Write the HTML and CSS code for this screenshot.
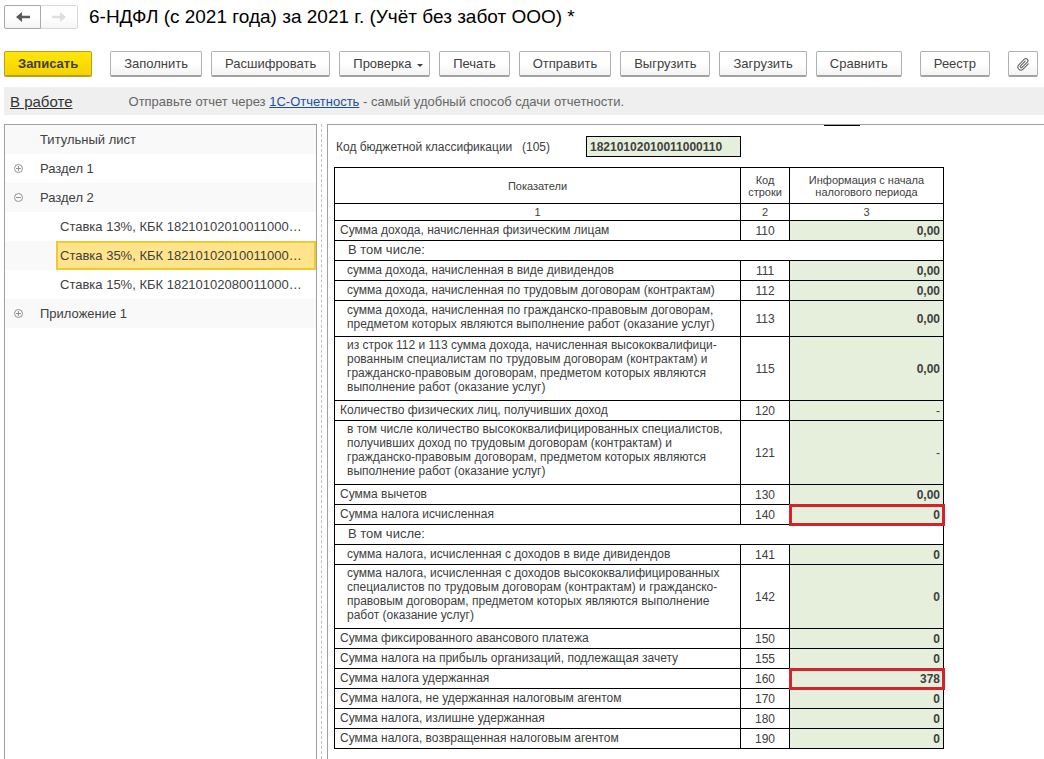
FILE: index.html
```html
<!DOCTYPE html>
<html lang="ru">
<head>
  <meta charset="UTF-8">
  <title>6-НДФЛ (с 2021 года) за 2021 г.</title>
  <link rel="stylesheet" href="styles.css">
</head>
<body>

  <header class="header">
    <div class="history">
      <button class="history-button" type="button" aria-label="Назад">
        <svg width="14" height="10" viewBox="0 0 14 10"><path d="M0 5 6 0V3.8H14V6.2H6V10Z" fill="#5a5a5a"/></svg>
      </button>
      <button class="history-button" type="button" aria-label="Вперед" disabled>
        <svg width="14" height="10" viewBox="0 0 14 10"><path d="M14 5 8 0V3.8H0V6.2H8V10Z" fill="#dedede"/></svg>
      </button>
    </div>
    <h1>6-НДФЛ (с 2021 года) за 2021 г. (Учёт без забот ООО) *</h1>
  </header>

  <div class="toolbar">
    <button class="button primary" type="button">Записать</button>
    <div class="button-group">
      <button class="button" type="button">Заполнить</button>
      <button class="button" type="button">Расшифровать</button>
      <button class="button dropdown" type="button">Проверка <span class="arrow"></span></button>
      <button class="button" type="button">Печать</button>
      <button class="button" type="button">Отправить</button>
      <button class="button" type="button">Выгрузить</button>
      <button class="button" type="button">Загрузить</button>
      <button class="button" type="button">Сравнить</button>
    </div>
    <button class="button" type="button">Реестр</button>
    <button class="button attach" type="button" aria-label="Файлы">
      <svg width="14" height="14" viewBox="0 0 14 14" fill="none" stroke="#666" stroke-width="1.1" stroke-linecap="round"><path d="M9.2 4.2 4.6 8.8a1 1 0 0 0 1.5 1.5l5.2-5.2a2 2 0 0 0-2.9-2.9L2.8 7.8a3 3 0 0 0 4.3 4.3l5.2-5.2"/></svg>
    </button>
  </div>

  <div class="info">
    <a class="status" href="#">В работе</a>
    <p>Отправьте отчет через <a href="#">1С-Отчетность</a> - самый удобный способ сдачи отчетности.</p>
  </div>

  <main class="content">
    <nav class="tree">
      <div class="tree-row"><span class="tree-item">Титульный лист</span></div>
      <div class="tree-row">
        <button class="toggle" type="button" aria-label="Развернуть"><svg width="9" height="9" viewBox="0 0 9 9" fill="none" stroke="#909090"><circle cx="4.5" cy="4.5" r="4"/><path d="M2 4.5H7M4.5 2V7"/></svg></button>
        <span class="tree-item">Раздел 1</span>
      </div>
      <div class="tree-row">
        <button class="toggle" type="button" aria-label="Свернуть"><svg width="9" height="9" viewBox="0 0 9 9" fill="none" stroke="#909090"><circle cx="4.5" cy="4.5" r="4"/><path d="M2 4.5H7"/></svg></button>
        <span class="tree-item">Раздел 2</span>
      </div>
      <div class="tree-row"><span class="tree-item child">Ставка 13%, КБК 18210102010011000110</span></div>
      <div class="tree-row"><span class="tree-item child selected">Ставка 35%, КБК 18210102010011000110</span></div>
      <div class="tree-row"><span class="tree-item child">Ставка 15%, КБК 18210102080011000110</span></div>
      <div class="tree-row">
        <button class="toggle" type="button" aria-label="Развернуть"><svg width="9" height="9" viewBox="0 0 9 9" fill="none" stroke="#909090"><circle cx="4.5" cy="4.5" r="4"/><path d="M2 4.5H7M4.5 2V7"/></svg></button>
        <span class="tree-item">Приложение 1</span>
      </div>
    </nav>

    <div class="splitter"></div>

    <section class="sheet">
      <div class="mark"></div>
      <div class="kbk">
        <label for="kbk">Код бюджетной классификации</label>
        <span class="kbk-line">(105)</span>
        <input id="kbk" type="text" value="18210102010011000110">
      </div>

      <table class="report">
        <colgroup>
          <col class="col-name">
          <col class="col-code">
          <col class="col-value">
        </colgroup>
        <thead>
          <tr class="titles"><th>Показатели</th><th>Код<br>строки</th><th>Информация с начала<br>налогового периода</th></tr>
          <tr class="numbers"><th>1</th><th>2</th><th>3</th></tr>
        </thead>
        <tbody>
          <tr><td>Сумма дохода, начисленная физическим лицам</td><td>110</td><td>0,00</td></tr>
          <tr><td class="including" colspan="3">В том числе:</td></tr>
          <tr class="sub"><td>сумма дохода, начисленная в виде дивидендов</td><td>111</td><td>0,00</td></tr>
          <tr class="sub"><td>сумма дохода, начисленная по трудовым договорам (контрактам)</td><td>112</td><td>0,00</td></tr>
          <tr class="sub two-lines"><td>сумма дохода, начисленная по гражданско-правовым договорам,<br>предметом которых являются выполнение работ (оказание услуг)</td><td>113</td><td>0,00</td></tr>
          <tr class="sub four-lines"><td>из строк 112 и 113 сумма дохода, начисленная высококвалифици-<br>рованным специалистам по трудовым договорам (контрактам) и<br>гражданско-правовым договорам, предметом которых являются<br>выполнение работ (оказание услуг)</td><td>115</td><td>0,00</td></tr>
          <tr><td>Количество физических лиц, получивших доход</td><td>120</td><td class="empty">-</td></tr>
          <tr class="sub four-lines"><td>в том числе количество высококвалифицированных специалистов,<br>получивших доход по трудовым договорам (контрактам) и<br>гражданско-правовым договорам, предметом которых являются<br>выполнение работ (оказание услуг)</td><td>121</td><td class="empty">-</td></tr>
          <tr><td>Сумма вычетов</td><td>130</td><td>0,00</td></tr>
          <tr><td>Сумма налога исчисленная</td><td>140</td><td class="marked">0</td></tr>
          <tr><td class="including" colspan="3">В том числе:</td></tr>
          <tr class="sub"><td>сумма налога, исчисленная с доходов в виде дивидендов</td><td>141</td><td>0</td></tr>
          <tr class="sub four-lines"><td>сумма налога, исчисленная с доходов высококвалифицированных<br>специалистов по трудовым договорам (контрактам) и гражданско-<br>правовым договорам, предметом которых являются выполнение<br>работ (оказание услуг)</td><td>142</td><td>0</td></tr>
          <tr><td>Сумма фиксированного авансового платежа</td><td>150</td><td>0</td></tr>
          <tr><td>Сумма налога на прибыль организаций, подлежащая зачету</td><td>155</td><td>0</td></tr>
          <tr><td>Сумма налога удержанная</td><td>160</td><td class="marked">378</td></tr>
          <tr><td>Сумма налога, не удержанная налоговым агентом</td><td>170</td><td>0</td></tr>
          <tr><td>Сумма налога, излишне удержанная</td><td>180</td><td>0</td></tr>
          <tr><td>Сумма налога, возвращенная налоговым агентом</td><td>190</td><td>0</td></tr>
        </tbody>
      </table>
    </section>
  </main>

</body>
</html>
```
FILE: styles.css
```css
* {
  box-sizing: border-box;
}

body {
  margin: 0;
  padding: 5px 0 0 4px;
  min-height: 100vh;
  display: flex;
  flex-direction: column;
  background-color: #fff;
  color: #404040;
  font-family: "Liberation Sans", Arial, sans-serif;
  font-size: 13px;
}

button,
input {
  font: inherit;
  color: inherit;
}

/* Header */
.header {
  display: flex;
  align-items: center;
  gap: 11px;
  height: 24px;
}

.history {
  display: flex;
}

.history-button {
  display: flex;
  align-items: center;
  justify-content: center;
  width: 37px;
  height: 24px;
  padding: 0;
  border: 1px solid #a8a8a8;
  border-radius: 2px 0 0 2px;
  background: linear-gradient(#fff 50%, #f5f5f5);
}

.history-button:disabled {
  border-color: #d8d8d8;
  border-left: none;
  border-radius: 0 2px 2px 0;
}

h1 {
  margin: 0;
  font-size: 19px;
  font-weight: normal;
  line-height: 24px;
  color: #000;
}

/* Toolbar */
.toolbar {
  display: flex;
  gap: 18px;
  margin-top: 22px;
}

.button-group {
  display: flex;
  gap: 9px;
}

.button {
  height: 26px;
  padding: 0 13px;
  border: 1px solid #b0b0b0;
  border-bottom: 2px solid #a0a0a0;
  border-radius: 2px;
  background: linear-gradient(#fff 50%, #f3f3f3);
  white-space: nowrap;
  cursor: pointer;
}

.button.primary {
  border-color: #b5a020;
  background: linear-gradient(#ffe60a, #f5d300);
  font-weight: bold;
}

.button.dropdown {
  padding-right: 6px;
}

.button.attach {
  display: flex;
  align-items: center;
  padding: 0 7px;
}

.arrow {
  display: inline-block;
  margin-left: 2px;
  border: 3px solid transparent;
  border-top-color: #404040;
  border-bottom: none;
  vertical-align: 1px;
}

/* Info line */
.info {
  display: flex;
  align-items: center;
  gap: 56px;
  height: 28px;
  margin-top: 10px;
  padding-left: 6px;
  background-color: #efefef;
  color: #666;
}

.info p {
  margin: 0;
}

.info a {
  color: #1f4e9e;
}

.info .status {
  font-size: 15px;
  color: #333;
}

/* Content */
.content {
  display: flex;
  flex: 1;
  margin-top: 9px;
}

.tree {
  flex: 0 0 313px;
  min-width: 0;
  border: 1px solid #a0a0a0;
  border-bottom: none;
}

.tree-row {
  display: flex;
  align-items: center;
  height: 29px;
}

.tree-row:nth-child(odd) {
  background-color: #f9f9f9;
}

.tree-item {
  flex: 1;
  margin-left: 35px;
  line-height: 29px;
}

.tree-item.child {
  min-width: 0;
  margin-left: 51px;
  padding: 0 10px 0 4px;
  white-space: nowrap;
  overflow: hidden;
  text-overflow: ellipsis;
}

.tree-item.child.selected {
  padding: 0 8px 0 2px;
  border: 2px solid #efc832;
  background-color: #ffe48c;
  line-height: 25px;
}

.toggle {
  display: flex;
  padding: 0;
  margin-left: 9px;
  border: none;
  background: none;
}

.toggle + .tree-item {
  margin-left: 17px;
}

.splitter {
  margin: 0 5px 0 4px;
  border-left: 1px dashed #c0c0c0;
}

/* Report sheet */
.sheet {
  flex: 1;
  border-top: 1px solid #a0a0a0;
  border-left: 1px solid #a0a0a0;
  padding-left: 6px;
  font-size: 12px;
}

.mark {
  width: 36px;
  height: 1px;
  margin-left: 490px;
  background-color: #000;
}

.kbk {
  display: flex;
  align-items: center;
  margin-top: 10px;
  padding-left: 2px;
}

.kbk label {
  width: 186px;
  white-space: nowrap;
}

.kbk-line {
  width: 64px;
}

.kbk input {
  width: 155px;
  height: 21px;
  padding: 0 3px;
  border: 1px solid #000;
  border-radius: 0;
  background-color: #e6efdc;
  font-weight: bold;
}

.report {
  width: 610px;
  margin-top: 10px;
  border-collapse: collapse;
  table-layout: fixed;
  line-height: 14px;
}

.col-name {
  width: 406px;
}

.col-code {
  width: 49px;
}

.report th,
.report td {
  height: 20px;
  padding: 0;
  border: 1px solid #000;
}

.report th {
  font-size: 11px;
  font-weight: normal;
  line-height: 12px;
}

.report .titles th {
  height: 36px;
}

.report .numbers th {
  height: 17px;
}

.report td:first-child {
  padding: 2px 0 0 5px;
  vertical-align: top;
  white-space: nowrap;
}

.report td:nth-child(2) {
  text-align: center;
}

.report td:nth-child(3) {
  padding: 1px 3px 0 0;
  background-color: #e6efdc;
  font-weight: bold;
  text-align: right;
}

.report td:nth-child(3).empty {
  font-weight: normal;
}

.report .sub td:first-child {
  padding-left: 12px;
}

.report td.including:first-child {
  padding-left: 13px;
  font-size: 13px;
}

.report .two-lines td {
  height: 36px;
}

.report .four-lines td {
  height: 64px;
}

.report .four-lines td:first-child {
  padding-top: 1px;
}

.report td.marked {
  outline: 3px solid #d5232b;
  outline-offset: -2px;
}
```
